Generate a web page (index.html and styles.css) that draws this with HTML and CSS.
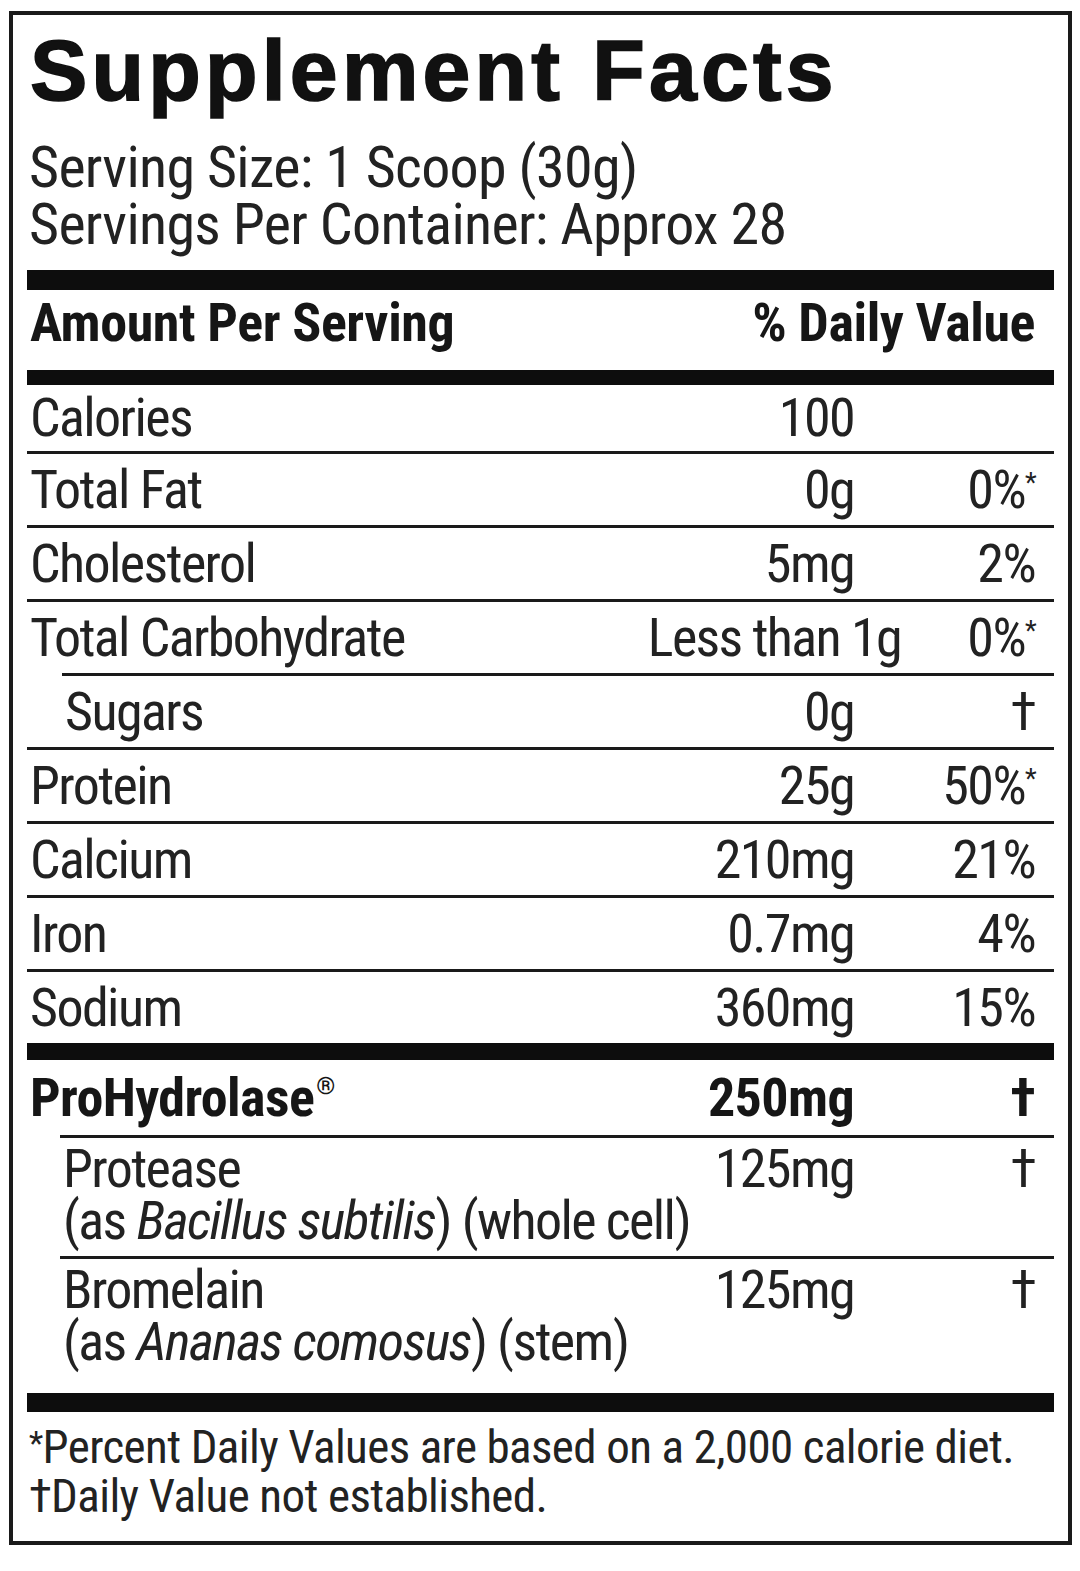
FILE: index.html
```html
<!DOCTYPE html>
<html lang="en">
<head>
<meta charset="utf-8">
<title>Supplement Facts</title>
<link rel="stylesheet" href="styles.css">
</head>
<body>
<div class="label">
  <h1 class="title">Supplement Facts</h1>
  <div class="serving">
    <p>Serving Size: 1 Scoop (30g)</p>
    <p>Servings Per Container: Approx 28</p>
  </div>
  <div class="bar bar-1"></div>
  <div class="row head"><span class="name">Amount Per Serving</span><span class="dv">% Daily Value</span></div>
  <div class="bar bar-2"></div>
  <div class="row first"><span class="name">Calories</span><span class="amt">100</span><span class="dv"></span></div>
  <div class="row"><span class="name">Total Fat</span><span class="amt">0g</span><span class="dv">0%<sup class="ast">*</sup></span></div>
  <div class="row"><span class="name">Cholesterol</span><span class="amt">5mg</span><span class="dv">2%</span></div>
  <div class="row"><span class="name">Total Carbohydrate</span><span class="amt over">Less than 1g</span><span class="dv">0%<sup class="ast">*</sup></span></div>
  <div class="row sub"><span class="name">Sugars</span><span class="amt">0g</span><span class="dv">†</span></div>
  <div class="row"><span class="name">Protein</span><span class="amt">25g</span><span class="dv">50%<sup class="ast">*</sup></span></div>
  <div class="row"><span class="name">Calcium</span><span class="amt">210mg</span><span class="dv">21%</span></div>
  <div class="row"><span class="name">Iron</span><span class="amt">0.7mg</span><span class="dv">4%</span></div>
  <div class="row"><span class="name">Sodium</span><span class="amt">360mg</span><span class="dv">15%</span></div>
  <div class="bar bar-3"></div>
  <div class="row blend"><span class="name">ProHydrolase<sup class="reg">®</sup></span><span class="amt">250mg</span><span class="dv">†</span></div>
  <div class="row nested"><span class="name">Protease<br>(as <i>Bacillus subtilis</i>) (whole cell)</span><span class="amt">125mg</span><span class="dv">†</span></div>
  <div class="row nested last"><span class="name">Bromelain<br>(as <i>Ananas comosus</i>) (stem)</span><span class="amt">125mg</span><span class="dv">†</span></div>
  <div class="bar bar-4"></div>
  <div class="foot">
    <p><span class="fast">*</span>Percent Daily Values are based on a 2,000 calorie diet.</p>
    <p>†Daily Value not established.</p>
  </div>
</div>
</body>
</html>
```
FILE: styles.css
```css
* {
  box-sizing: border-box;
  margin: 0;
  padding: 0;
}

body {
  margin: 0;
  background: #ffffff;
  font-family: "Roboto Condensed", "Liberation Sans Narrow", sans-serif;
  color: #222222;
}

.label {
  margin: 11px 0 0 9px;
  width: 1063px;
  border: 4px solid #1a1a1a;
  padding: 12px 14px 21px;
  background: #ffffff;
}

.title {
  font-family: "Liberation Sans", Arial, sans-serif;
  font-weight: 700;
  font-size: 86px;
  line-height: 86px;
  letter-spacing: 4.2px;
  padding-left: 3px;
  margin-bottom: 26px;
  color: #111111;
  -webkit-text-stroke: 1.6px #111111;
}

.serving p {
  font-size: 58px;
  line-height: 57px;
  letter-spacing: -0.7px;
  padding-left: 2px;
  white-space: nowrap;
}

.bar {
  background: #0d0d0d;
}

.bar-1 {
  height: 20px;
  margin-top: 17px;
}

.bar-2 {
  height: 15px;
}

.bar-3 {
  height: 17px;
}

.bar-4 {
  height: 19px;
}

.row {
  display: grid;
  grid-template-columns: minmax(0, 1fr) auto 200px;
  align-items: start;
  font-size: 54px;
  line-height: 71px;
  letter-spacing: -1.6px;
  border-top: 3px solid #1a1a1a;
  white-space: nowrap;
}

.row .name {
  padding-left: 3px;
}

.row .amt {
  text-align: right;
}

.row .dv {
  text-align: right;
  padding-right: 19px;
}

.row .over {
  margin-right: -47px;
}

.row.head {
  grid-template-columns: minmax(0, 1fr) auto;
  border-top: none;
  font-weight: 700;
  line-height: 66px;
  letter-spacing: -0.4px;
  padding-bottom: 14px;
  color: #161616;
}

.row.first {
  border-top: none;
  line-height: 66px;
}

.row.sub {
  margin-left: 35px;
}

.row.blend {
  border-top: none;
  font-weight: 700;
  line-height: 75px;
  letter-spacing: -0.6px;
  color: #161616;
}

.row.nested {
  margin-left: 33px;
  line-height: 52px;
  padding: 5px 0 9px;
}

.row.nested.last {
  padding-bottom: 25px;
}

.ast {
  font-size: 0.5em;
  line-height: 0;
  vertical-align: 16px;
}

.reg {
  font-size: 0.45em;
  line-height: 0;
  vertical-align: 22px;
  padding-left: 2px;
}

.foot {
  font-size: 47px;
  line-height: 49px;
  padding-top: 10px;
  padding-left: 2px;
  letter-spacing: -0.6px;
  white-space: nowrap;
}

.fast {
  font-size: 0.7em;
  vertical-align: 8px;
  line-height: 0;
}
```
